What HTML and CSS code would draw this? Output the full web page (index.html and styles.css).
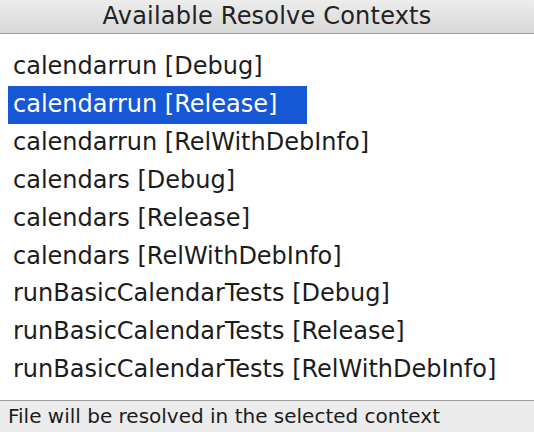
FILE: index.html
```html
<!DOCTYPE html>
<html>
<head>
<meta charset="utf-8">
<link rel="stylesheet" href="styles.css">
</head>
<body>
<div class="window">
  <div class="titlebar">Available Resolve Contexts</div>
  <ul class="list">
    <li class="item">calendarrun [Debug]</li>
    <li class="item selected">calendarrun [Release]</li>
    <li class="item">calendarrun [RelWithDebInfo]</li>
    <li class="item">calendars [Debug]</li>
    <li class="item">calendars [Release]</li>
    <li class="item">calendars [RelWithDebInfo]</li>
    <li class="item">runBasicCalendarTests [Debug]</li>
    <li class="item">runBasicCalendarTests [Release]</li>
    <li class="item">runBasicCalendarTests [RelWithDebInfo]</li>
  </ul>
  <div class="status">File will be resolved in the selected context</div>
</div>
</body>
</html>
```

FILE: styles.css
```css
html, body {
  margin: 0;
  padding: 0;
  background: #ffffff;
}
.window {
  width: 534px;
  height: 432px;
  display: flex;
  flex-direction: column;
  font-family: "DejaVu Sans", "Liberation Sans", sans-serif;
  color: #1c1c1c;
  overflow: hidden;
}
.titlebar {
  height: 33px;
  flex: none;
  background: linear-gradient(#ededed, #d8d8d8);
  border-bottom: 1px solid #9c9c9c;
  text-align: center;
  font-size: 24px;
  letter-spacing: 0.2px;
  line-height: 33px;
  color: #222;
}
.list {
  list-style: none;
  margin: 0;
  padding: 14px 0 0 8px;
  flex: 1;
}
.item {
  display: table;
  height: 37.9px;
  line-height: 37.9px;
  padding: 0 30px 0 5px;
  font-size: 24px;
}
.selected {
  background: #1557d4;
  color: #ffffff;
}
.status {
  flex: none;
  height: 31px;
  background: #ececec;
  border-top: 1px solid #9a9a9a;
  padding-left: 8px;
  font-size: 20px;
  line-height: 30px;
  color: #1c1c1c;
}
```
